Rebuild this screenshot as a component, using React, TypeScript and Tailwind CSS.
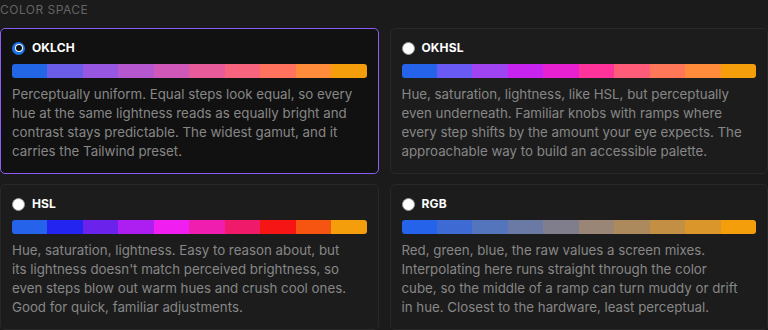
import React from 'react'

type Space = {
  name: string
  selected?: boolean
  swatches: string[]
  lines: string[]
}

const spaces: Space[] = [
  {
    name: 'OKLCH',
    selected: true,
    swatches: ['#2266e6', '#6b5de8', '#9857e0', '#b558d0', '#cf58b8', '#e85b9b', '#f6647e', '#ff735e', '#ff8c3b', '#f59e0b'],
    lines: [
      'Perceptually uniform. Equal steps look equal, so every',
      'hue at the same lightness reads as equally bright and',
      'contrast stays predictable. The widest gamut, and it',
      'carries the Tailwind preset.',
    ],
  },
  {
    name: 'OKHSL',
    swatches: ['#2563eb', '#6a5af5', '#a044f2', '#c724ef', '#e720d0', '#ff3399', '#ff5c7a', '#ff7759', '#ff8c3a', '#f59e0b'],
    lines: [
      'Hue, saturation, lightness, like HSL, but perceptually',
      'even underneath. Familiar knobs with ramps where',
      'every step shifts by the amount your eye expects. The',
      'approachable way to build an accessible palette.',
    ],
  },
  {
    name: 'HSL',
    swatches: ['#2563eb', '#2424f0', '#6b22ea', '#ac1ff0', '#f01ef0', '#f01eae', '#f01a6a', '#f51515', '#f55510', '#f59e0b'],
    lines: [
      'Hue, saturation, lightness. Easy to reason about, but',
      "its lightness doesn't match perceived brightness, so",
      'even steps blow out warm hues and crush cool ones.',
      'Good for quick, familiar adjustments.',
    ],
  },
  {
    name: 'RGB',
    swatches: ['#2563eb', '#3e6ad4', '#5474bb', '#6a7aa4', '#807e8c', '#998677', '#ad8a5d', '#c28f44', '#da952b', '#f59e0b'],
    lines: [
      'Red, green, blue, the raw values a screen mixes.',
      'Interpolating here runs straight through the color',
      'cube, so the middle of a ramp can turn muddy or drift',
      'in hue. Closest to the hardware, least perceptual.',
    ],
  },
]

function Radio({ checked }: { checked?: boolean }) {
  if (checked) {
    return (
      <span className="w-[13px] h-[13px] rounded-full bg-[#1a73e8] flex items-center justify-center shrink-0">
        <span className="w-[8px] h-[8px] rounded-full bg-white flex items-center justify-center">
          <span className="w-[6px] h-[6px] rounded-full bg-[#111111]" />
        </span>
      </span>
    )
  }
  return <span className="w-[13px] h-[13px] rounded-full bg-white border border-[#9a9a9a] shrink-0" />
}

function SpaceCard({ space }: { space: Space }) {
  return (
    <div
      className={
        space.selected
          ? 'rounded-[5px] border border-[#8b5cf6] bg-[#111111] px-[11px] pt-[11px] pb-[12px]'
          : 'rounded-[5px] border border-[#282828] bg-[#1c1c1c] px-[11px] pt-[11px] pb-[12px]'
      }
    >
      <div className="flex items-center gap-[7px] h-[16px]">
        <Radio checked={space.selected} />
        <span className="text-[12px] font-bold text-white tracking-[0.01em] leading-none">{space.name}</span>
      </div>

      <div className="flex h-[14px] rounded-[3px] overflow-hidden mt-[8px]">
        {space.swatches.map((c) => (
          <div key={c} className="flex-1" style={{ backgroundColor: c }} />
        ))}
      </div>

      <p className="mt-[7px] text-[13.3px] leading-[19px] text-[#878787]">
        {space.lines.map((line, i) => (
          <span key={i} className="block whitespace-nowrap">
            {line}
          </span>
        ))}
      </p>
    </div>
  )
}

export default function App() {
  return (
    <div className="w-[768px] h-[330px] overflow-hidden bg-[#1b1b1b] pt-[2px]" style={{ fontFamily: 'Inter, "Noto Sans", sans-serif' }}>
      <div className="text-[12px] leading-[16px] tracking-[0.04em] text-[#646464] mb-[10px]">COLOR SPACE</div>
      <div className="grid grid-cols-2 gap-x-[11px] gap-y-[10px]">
        {spaces.map((s) => (
          <SpaceCard key={s.name} space={s} />
        ))}
      </div>
    </div>
  )
}
